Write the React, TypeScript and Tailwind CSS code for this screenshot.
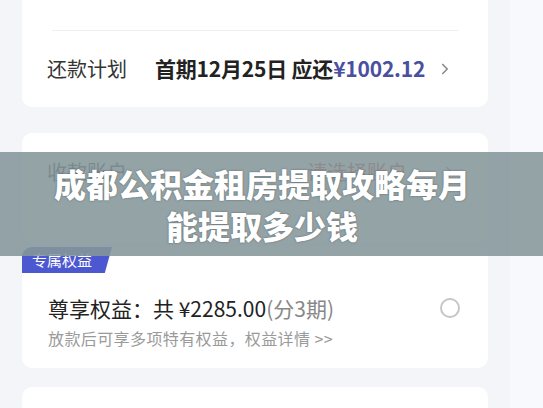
import { ChevronRight } from "lucide-react";

const font = "font-['Noto_Sans_CJK_SC','Noto_Sans',sans-serif]";

const App = () => {
  return (
    <div className={`relative h-[408px] w-[543px] overflow-hidden bg-[#f8f9fc] ${font}`}>
      <div className="flex h-full w-[510px] flex-col gap-[26px] bg-[#f4f5f9] px-[22px]">
        {/* top card, cut at the top */}
        <div className="-mt-[30px] flex h-[137px] shrink-0 flex-col rounded-b-[10px] bg-white">
          <div className="mx-[30px] flex h-[61px] items-end border-b border-[#eeeff3] pb-[30px]">
            <span className="text-[20px] leading-[20px] text-[#d6d8dc]">借款用途</span>
          </div>
          <div className="flex flex-1 items-center pl-[25px] pr-[34px]">
            <span className="w-[108px] text-[20px] text-[#333]">还款计划</span>
            <span className="text-[21px] font-bold tracking-[-0.2px] text-[#222]">
              首期12月25日 应还<span className="text-[#4a4f9f]">¥1002.12</span>
            </span>
            <ChevronRight className="ml-auto h-[18px] w-[18px] text-[#8a8a8a]" strokeWidth={2.2} />
          </div>
        </div>

        {/* second card, mostly hidden under the banner */}
        <div className="flex h-[110px] shrink-0 flex-col rounded-[10px] bg-white">
          <div className="flex items-center pl-[25px] pr-[30px] pt-[24px]">
            <span className="w-[260px] text-[20px] leading-[30px] text-[#333]">收款账户</span>
            <span className="text-[20px] leading-[30px] text-[#c0392b]">请选择账户</span>
            <ChevronRight className="ml-auto h-[18px] w-[18px] text-[#8a8a8a]" strokeWidth={2.2} />
          </div>
        </div>

        {/* benefits card */}
        <div className="-mt-[22px] flex h-[121px] shrink-0 flex-col rounded-[10px] bg-white">
          <div className="flex h-[26px] w-[90px] items-center rounded-tl-[10px] bg-[#4c58cf] pl-[10px] text-[15px] text-white [clip-path:polygon(0_0,100%_0,92%_100%,0_100%)]">
            专属权益
          </div>
          <div className="flex items-start pl-[26px] pr-[28px] pt-[22px]">
            <div className="flex flex-col gap-[7px]">
              <span className="text-[21px] leading-[26px] text-[#222]">
                尊享权益：共 ¥2285.00<span className="text-[#888]">(分3期)</span>
              </span>
              <span className="text-[16px] leading-[20px] tracking-[0.4px] text-[#9a9a9a]">
                放款后可享多项特有权益，权益详情 &gt;&gt;
              </span>
            </div>
            <div className="ml-auto mt-[3px] h-[20px] w-[20px] rounded-full border-2 border-[#c6c6c6]" />
          </div>
        </div>

        <div className="-mt-[7px] h-[40px] shrink-0 rounded-t-[10px] bg-white" />
      </div>

      {/* title banner */}
      <div className="absolute left-0 right-0 top-[152px] flex h-[104px] flex-col items-center justify-center bg-[rgba(133,150,154,0.88)] pr-[19px]">
        <p className="text-[32px] font-black leading-[42px] text-white [text-shadow:0_0_2px_rgba(40,50,55,0.6)]">
          成都公积金租房提取攻略每月
        </p>
        <p className="text-[32px] font-black leading-[42px] text-white [text-shadow:0_0_2px_rgba(40,50,55,0.6)]">
          能提取多少钱
        </p>
      </div>
    </div>
  );
};

export default App;
